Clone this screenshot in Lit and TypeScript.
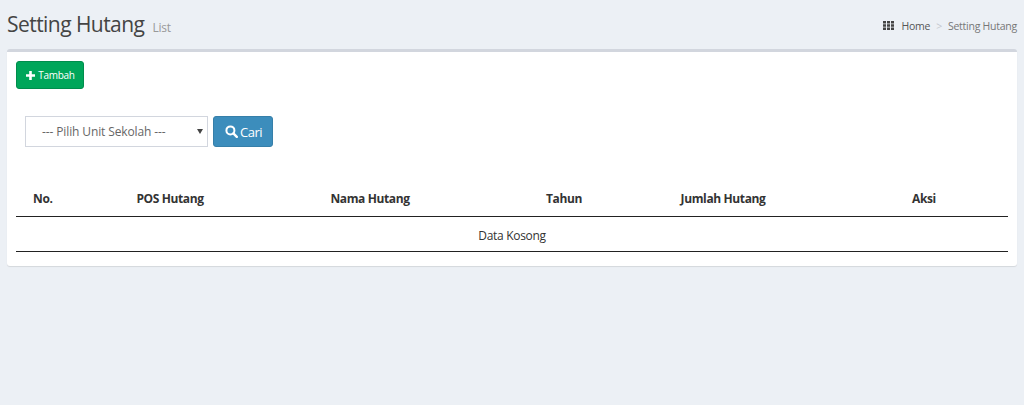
import { LitElement, html, css } from "lit";
import { customElement } from "lit/decorators.js";

@customElement("app-root")
export class AppRoot extends LitElement {
  static styles = css`
    :host {
      display: block;
      min-height: 405px;
      background: #ecf0f5;
      font-family: "Open Sans", "Noto Sans", sans-serif;
      color: #333;
      overflow: hidden;
    }
    .head {
      height: 49px;
      box-sizing: border-box;
      padding: 0 7px 0 7px;
      display: flex;
      align-items: center;
      justify-content: space-between;
    }
    .title {
      display: flex;
      align-items: baseline;
      gap: 8px;
      margin: 0 0 1px;
      font-weight: 400;
      font-size: 21px;
      letter-spacing: -0.55px;
      color: #444;
    }
    .title small {
      font-size: 12px;
      letter-spacing: -0.2px;
      color: #999;
    }
    .crumb {
      display: flex;
      align-items: center;
      font-size: 10.5px;
      letter-spacing: -0.25px;
      color: #555;
      margin-top: 2px;
    }
    .crumb svg { margin-right: 7px; }
    .crumb .sep { margin: 0 6px; color: #c4c8cf; }
    .crumb .cur { color: #777; }
    .box {
      margin: 0 7px;
      background: #fff;
      border-top: 3px solid #d2d6de;
      border-radius: 3px;
      box-shadow: 0 1px 1px rgba(0, 0, 0, 0.1);
      padding: 9px 9px 14px;
      height: 217px;
      box-sizing: border-box;
    }
    .btn {
      display: inline-flex;
      align-items: center;
      justify-content: center;
      box-sizing: border-box;
      border-radius: 3px;
      color: #fff;
      font-family: inherit;
    }
    .add {
      width: 68px;
      height: 28px;
      background: #00a65a;
      border: 1px solid #008d4c;
      font-size: 10px;
      letter-spacing: -0.3px;
      gap: 3px;
      padding-left: 1px;
    }
    .search {
      display: flex;
      gap: 5px;
      margin: 27px 0 0 9px;
    }
    .select {
      width: 183px;
      height: 31px;
      box-sizing: border-box;
      border: 1px solid #d2d6de;
      display: flex;
      align-items: center;
      justify-content: space-between;
      padding: 0 4px 0 16px;
      font-size: 12px;
      letter-spacing: -0.12px;
      color: #666;
    }
    .arrow {
      width: 0;
      height: 0;
      border-left: 3.5px solid transparent;
      border-right: 3.5px solid transparent;
      border-top: 5px solid #444;
    }
    .find {
      width: 60px;
      height: 31px;
      background: #3c8dbc;
      border: 1px solid #367fa9;
      font-size: 13px;
      letter-spacing: -0.45px;
      gap: 2px;
      padding-left: 1px;
    }
    table {
      margin-top: 27px;
      width: 992px;
      table-layout: fixed;
      border-collapse: collapse;
      font-size: 12px;
      letter-spacing: -0.38px;
      color: #333;
    }
    th, td { text-align: center; box-sizing: border-box; }
    th {
      height: 42px;
      padding: 7px 0 0;
      font-weight: 700;
      border-bottom: 1px solid #222;
    }
    th.no { text-align: left; padding-left: 17px; }
    td {
      height: 35px;
      padding: 3px 0 0;
      border-bottom: 1px solid #222;
      font-size: 12px;
      letter-spacing: -0.3px;
    }
  `;

  render() {
    return html`
      <div class="head">
        <h1 class="title">Setting Hutang <small>List</small></h1>
        <div class="crumb">
          <svg width="11" height="9" viewBox="0 0 11 9" fill="#444">
            <path d="M0 0h3v2.5H0zM4 0h3v2.5H4zM8 0h3v2.5H8zM0 3.25h3v2.5H0zM4 3.25h3v2.5H4zM8 3.25h3v2.5H8zM0 6.5h3V9H0zM4 6.5h3V9H4zM8 6.5h3V9H8z"/>
          </svg>
          <span>Home</span><span class="sep">&gt;</span><span class="cur">Setting Hutang</span>
        </div>
      </div>
      <div class="box">
        <div class="btn add">
          <svg width="9" height="9" viewBox="0 0 9 9" fill="#fff"><path d="M3.2 0h2.6v3.2H9v2.6H5.8V9H3.2V5.8H0V3.2h3.2z"/></svg>
          <span>Tambah</span>
        </div>
        <div class="search">
          <div class="select"><span>--- Pilih Unit Sekolah ---</span><span class="arrow"></span></div>
          <div class="btn find">
            <svg width="13" height="13" viewBox="0 0 13 13" fill="none" stroke="#fff"><circle cx="5.4" cy="5.4" r="4" stroke-width="2"/><path d="M8.4 8.4l3.4 3.4" stroke-width="2.4" stroke-linecap="round"/></svg>
            <span>Cari</span>
          </div>
        </div>
        <table>
          <colgroup>
            <col style="width:106px" /><col style="width:96px" /><col style="width:304px" />
            <col style="width:84px" /><col style="width:234px" /><col style="width:168px" />
          </colgroup>
          <thead>
            <tr>
              <th class="no">No.</th><th>POS Hutang</th><th>Nama Hutang</th>
              <th>Tahun</th><th>Jumlah Hutang</th><th>Aksi</th>
            </tr>
          </thead>
          <tbody>
            <tr><td colspan="6">Data Kosong</td></tr>
          </tbody>
        </table>
      </div>
    `;
  }
}
